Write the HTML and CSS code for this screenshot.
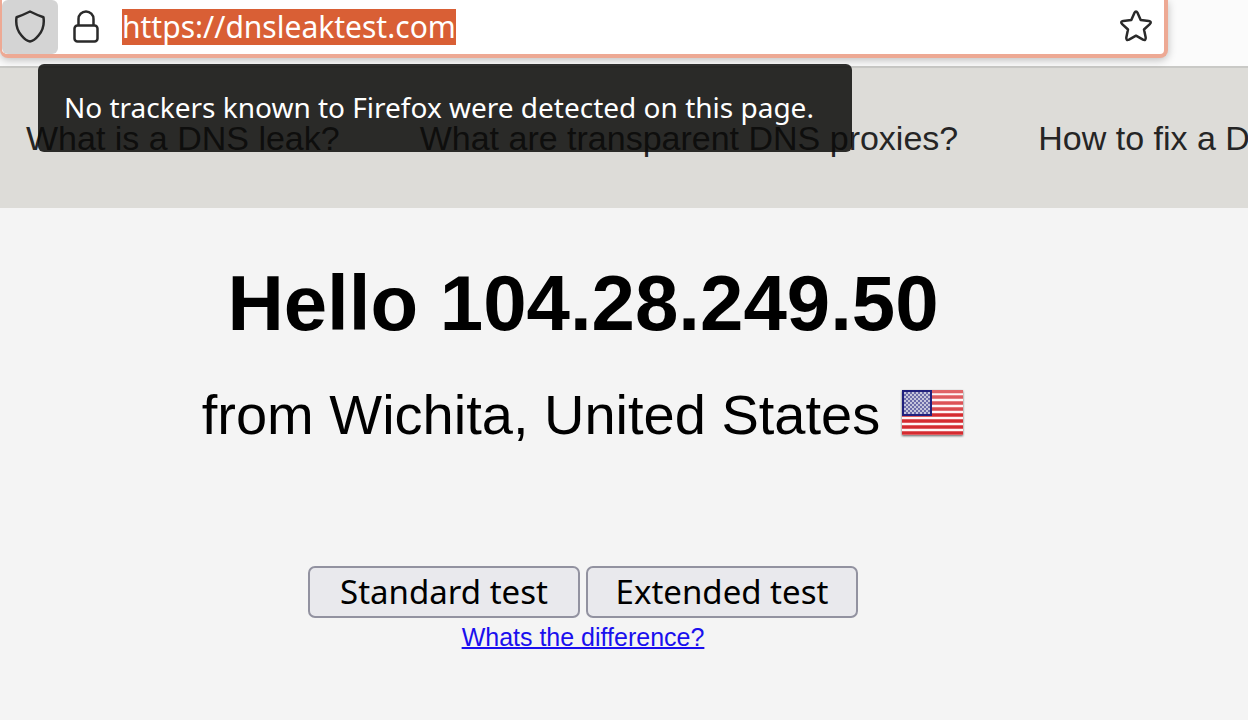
FILE: index.html
```html
<!DOCTYPE html>
<html lang="en">
<head>
<meta charset="utf-8">
<title>DNS leak test</title>
<link rel="stylesheet" href="styles.css">
</head>
<body>
<div class="toolbar">
  <div class="urlbar">
    <button class="icon-button shield" type="button" aria-label="Tracking protection" aria-describedby="tracker-tip">
      <svg width="32" height="36" viewBox="0 0 32 36"><path d="M16 3.500Q23 7 29.500 9.300Q31 20 24.500 27.500Q20 33 16 33.500Q12 33 7.500 27.500Q1 20 2.500 9.300Q9 7 16 3.500Z"/></svg>
    </button>
    <button class="icon-button" type="button" aria-label="Site security">
      <svg width="32" height="36" viewBox="0 0 32 36"><rect x="4.500" y="17.500" width="23" height="16" rx="3"/><path d="M8.500 17V11a7.500 7.500 0 0 1 15 0v6"/></svg>
    </button>
    <input class="address" type="text" value="https://dnsleaktest.com" aria-label="Address">
    <button class="icon-button star" type="button" aria-label="Bookmark this page">
      <svg width="36" height="36" viewBox="0 0 36 36"><path d="M16.400 4.900Q18 2 19.600 4.900L22.700 12L30.800 12.900Q34.200 13.700 31.800 16.100L26 21.500L27.700 29.400Q28 33 25 31.700L18 27.700L11 31.700Q8 33 8.300 29.400L10 21.500L4.200 16.100Q1.800 13.700 5.200 12.900L13.300 12Z"/></svg>
    </button>
  </div>
  <div class="tooltip" id="tracker-tip" role="tooltip">No trackers known to Firefox were detected on this page.</div>
</div>
<nav class="site-nav">
  <a href="#leak">What is a DNS leak?</a>
  <a href="#proxies">What are transparent DNS proxies?</a>
  <a href="#fix">How to fix a DNS leak</a>
</nav>
<main class="content">
  <h1>Hello 104.28.249.50</h1>
  <p class="location">from Wichita, United States
    <svg class="flag" width="62" height="50" viewBox="0 0 62 50" role="img" aria-label="United States flag">
      <defs>
        <pattern id="stars" width="4" height="4" patternUnits="userSpaceOnUse"><rect width="4" height="4" fill="#6b6ba8"/><path d="M0 0h2v2H0zM2 2h2v2H2z" fill="#c5c5dc"/></pattern>
        <linearGradient id="gloss" x2="0" y2="1"><stop stop-color="#fff" stop-opacity=".28"/><stop offset="1" stop-color="#fff" stop-opacity=".12"/></linearGradient>
      </defs>
      <rect x="0" y="0" width="61" height="45" fill="#fff5f5"/>
      <path d="M0 1.500h61M0 7h61M0 13h61M0 19h61M0 25h61M0 31h61M0 37h61M0 43h61" stroke="#d52b30" stroke-width="3.400"/>
      <rect x="30" y="0" width="31" height="22" fill="url(#gloss)"/>
      <rect x="0" y="0" width="30" height="26" fill="#20207d"/>
      <rect x="2" y="2" width="26" height="22" fill="url(#stars)"/>
    </svg>
  </p>
  <div class="tests">
    <button class="test" type="button">Standard test</button>
    <button class="test" type="button">Extended test</button>
  </div>
  <a class="difference" href="#difference">Whats the difference?</a>
</main>
</body>
</html>
```
FILE: styles.css
```css
* { box-sizing: border-box; }
html { background: #f4f4f4; }
body {
  margin: 0;
  overflow: hidden;
  font-family: "Liberation Sans", Arial, sans-serif;
  color: #000;
}
.toolbar {
  position: relative;
  height: 68px;
  padding-right: 80px;
  background: #fbfbfb;
  border-bottom: 2px solid #c9c9c6;
}
.urlbar {
  display: flex;
  align-items: center;
  height: 58px;
  padding-right: 10px;
  background: #fff;
  border: 4px solid #eda994;
  border-top: 0;
  border-left-width: 2px;
  border-radius: 0 0 8px 8px;
  box-shadow: 0 2px 8px rgba(0, 0, 0, 0.25);
}
.icon-button {
  display: flex;
  align-items: center;
  justify-content: center;
  width: 56px;
  height: 54px;
  padding: 0 0 2px;
  border: 0;
  background: none;
}
.icon-button svg {
  fill: none;
  stroke: #2a2a2a;
  stroke-width: 2.5;
  stroke-linejoin: round;
}
.shield {
  background: #d4d4d4;
  border-radius: 6px;
}
.star {
  width: 36px;
  margin-left: auto;
}
.address {
  field-sizing: content;
  height: 36px;
  margin-left: 8px;
  padding: 0;
  border: 0;
  outline: 0;
  background: #d95f35;
  color: #fff;
  font: 30px/36px "Noto Sans", sans-serif;
}
.tooltip {
  position: absolute;
  z-index: 1;
  top: 64px;
  left: 38px;
  padding: 23px 38px 25px 26px;
  border-radius: 6px;
  background: rgba(11, 11, 9, 0.85);
  color: #fff;
  font: 28px/40px "Noto Sans", sans-serif;
  white-space: nowrap;
}
.site-nav {
  display: flex;
  gap: 80px;
  overflow: hidden;
  padding: 50px 26px;
  background: #dddcd8;
  font-size: 34px;
  line-height: 40px;
  white-space: nowrap;
}
.site-nav a {
  color: #252525;
  text-decoration: none;
}
.content {
  display: flex;
  flex-direction: column;
  align-items: center;
  padding: 50px 82px 50px 0;
}
h1 {
  margin: 0;
  font-size: 78px;
  line-height: 90px;
}
.location {
  display: flex;
  align-items: center;
  gap: 22px;
  margin: 35px 0 0;
  font-size: 56px;
  line-height: 64px;
}
.flag { filter: drop-shadow(0 1px 1px rgba(0, 0, 0, 0.6)); }
.tests {
  display: flex;
  gap: 6px;
  margin-top: 119px;
}
.test {
  width: 272px;
  height: 52px;
  padding: 0;
  border: 2px solid #9292a0;
  border-radius: 7px;
  background: #e9e9ed;
  color: #000;
  font: 33px/44px "Noto Sans", sans-serif;
}
.difference {
  margin-top: 4px;
  color: #1a0fee;
  font-size: 25px;
  line-height: 30px;
  text-decoration-thickness: 2px;
}
```
